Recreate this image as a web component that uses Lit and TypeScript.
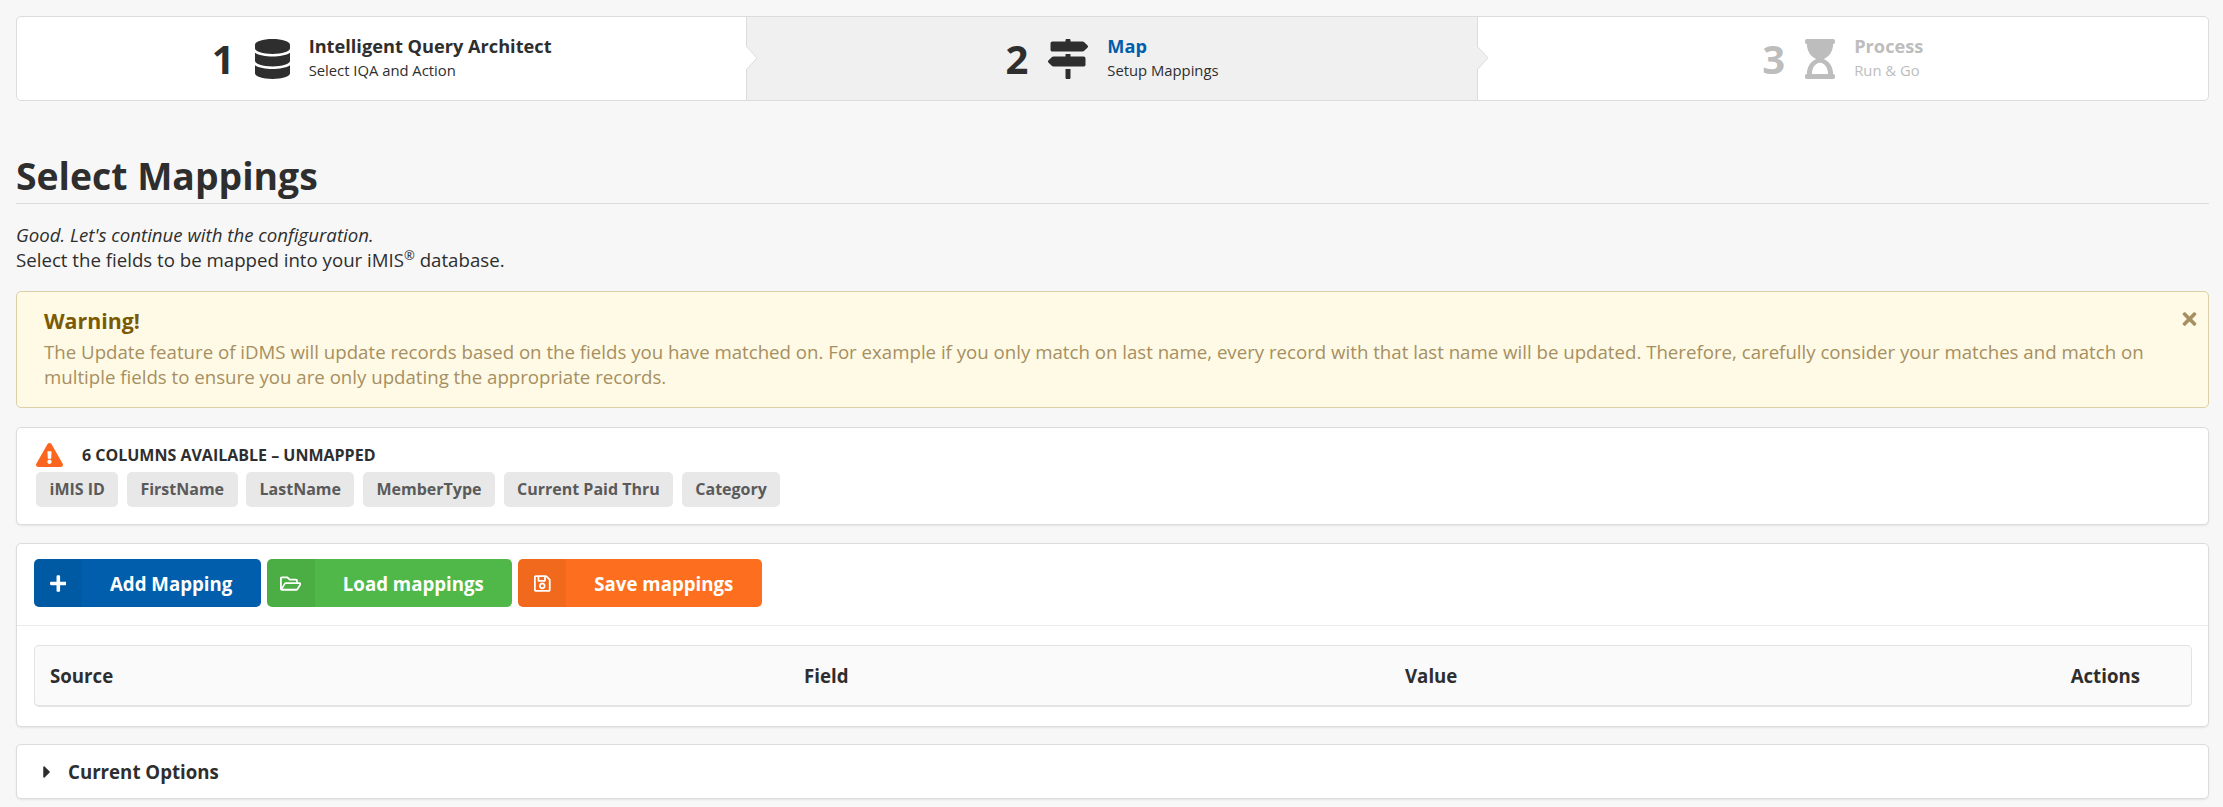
import { LitElement, html, css, svg } from "lit";
import { customElement } from "lit/decorators.js";

const icon = (vb: string, d: string, cls: string) =>
  html`<svg class=${cls} viewBox=${vb} aria-hidden="true">${svg`<path fill="currentColor" d=${d}></path>`}</svg>`;

const P = {
  database: "M448 73.143v45.714C448 159.143 347.667 192 224 192S0 159.143 0 118.857V73.143C0 32.857 100.333 0 224 0s224 32.857 224 73.143zM448 176v102.857C448 319.143 347.667 352 224 352S0 319.143 0 278.857V176c48.125 33.143 136.208 48.572 224 48.572S399.874 209.143 448 176zm0 160v102.857C448 479.143 347.667 512 224 512S0 479.143 0 438.857V336c48.125 33.143 136.208 48.572 224 48.572S399.874 369.143 448 336z",
  signs: "M507.31 84.69L464 41.37c-6-6-14.14-9.37-22.63-9.37H288V16c0-8.84-7.16-16-16-16h-32c-8.84 0-16 7.16-16 16v16H56c-13.25 0-24 10.75-24 24v80c0 13.25 10.75 24 24 24h385.37c8.49 0 16.62-3.37 22.63-9.37l43.31-43.31c6.25-6.26 6.25-16.38 0-22.63zM224 496c0 8.84 7.16 16 16 16h32c8.84 0 16-7.16 16-16V384h-64v112zm232-272H288v-32h-64v32H70.63c-8.49 0-16.62 3.37-22.63 9.37L4.69 276.69c-6.25 6.25-6.25 16.38 0 22.63L48 342.63c6 6 14.14 9.37 22.63 9.37H456c13.25 0 24-10.75 24-24v-80c0-13.25-10.75-24-24-24z",
  hourglass: "M360 0H24C10.745 0 0 10.745 0 24v16c0 13.255 10.745 24 24 24 0 90.965 51.016 167.734 120.842 192C75.016 280.266 24 357.035 24 448c-13.255 0-24 10.745-24 24v16c0 13.255 10.745 24 24 24h336c13.255 0 24-10.745 24-24v-16c0-13.255-10.745-24-24-24 0-90.965-51.016-167.734-120.842-192C308.984 231.734 360 154.965 360 64c13.255 0 24-10.745 24-24V24c0-13.255-10.745-24-24-24zm-64 448H88c0-77.458 46.204-144 104-144 57.786 0 104 66.517 104 144z",
  plus: "M416 208H272V64c0-17.67-14.33-32-32-32h-32c-17.67 0-32 14.33-32 32v144H32c-17.67 0-32 14.33-32 32v32c0 17.67 14.33 32 32 32h144v144c0 17.67 14.33 32 32 32h32c17.67 0 32-14.33 32-32V304h144c17.67 0 32-14.33 32-32v-32c0-17.67-14.33-32-32-32z",
  folder: "M527.9 224H480v-48c0-26.5-21.5-48-48-48H272l-64-64H48C21.5 64 0 85.5 0 112v288c0 26.5 21.5 48 48 48h400c16.5 0 31.9-8.5 40.7-22.6l79.9-128c20-31.9-3-73.4-40.7-73.4zM48 118c0-3.3 2.7-6 6-6h134.1l64 64H426c3.3 0 6 2.7 6 6v42H152c-16.8 0-32.4 8.8-41.1 23.2L48 351.4zm400 282H72l77.2-128H528z",
  save: "M433.941 129.941l-83.882-83.882A48 48 0 0 0 316.118 32H48C21.49 32 0 53.49 0 80v352c0 26.51 21.49 48 48 48h352c26.51 0 48-21.49 48-48V163.882a48 48 0 0 0-14.059-33.941zM272 80v80H144V80h128zm122 352H54a6 6 0 0 1-6-6V86a6 6 0 0 1 6-6h42v104c0 13.255 10.745 24 24 24h176c13.255 0 24-10.745 24-24V83.882l78.243 78.243a6 6 0 0 1 1.757 4.243V426a6 6 0 0 1-6 6zM224 232c-48.523 0-88 39.477-88 88s39.477 88 88 88 88-39.477 88-88-39.477-88-88-88zm0 128c-22.056 0-40-17.944-40-40s17.944-40 40-40 40 17.944 40 40-17.944 40-40 40z",
  times: "M242.72 256l100.07-100.07c12.28-12.28 12.28-32.19 0-44.48l-22.24-22.24c-12.28-12.28-32.19-12.28-44.48 0L176 189.28 75.93 89.21c-12.28-12.28-32.19-12.28-44.48 0L9.21 111.45c-12.28 12.28-12.28 32.19 0 44.48L109.28 256 9.21 356.07c-12.28 12.28-12.28 32.19 0 44.48l22.24 22.24c12.28 12.28 32.2 12.28 44.48 0L176 322.72l100.07 100.07c12.28 12.28 32.2 12.28 44.48 0l22.24-22.24c12.28-12.28 12.28-32.19 0-44.48L242.72 256z",
  warn: "M569.517 440.013C587.975 472.007 564.806 512 527.94 512H48.054c-36.937 0-59.999-40.055-41.577-71.987L246.423 23.985c18.467-32.009 64.72-31.951 83.154 0l239.94 416.028zM288 354c-25.405 0-46 20.595-46 46s20.595 46 46 46 46-20.595 46-46-20.595-46-46-46zm-43.673-165.346l7.418 136c.347 6.364 5.609 11.346 11.982 11.346h48.546c6.373 0 11.635-4.982 11.982-11.346l7.418-136c.375-6.874-5.098-12.654-11.982-12.654h-63.383c-6.884 0-12.356 5.78-11.981 12.654z",
  caret: "M0 384.662V127.338c0-17.818 21.543-26.741 34.142-14.142l128.662 128.662c7.81 7.81 7.81 20.474 0 28.284L34.142 398.804C21.543 411.404 0 402.48 0 384.662z",
};

const chips = ["iMIS ID", "FirstName", "LastName", "MemberType", "Current Paid Thru", "Category"];

@customElement("app-root")
export class AppRoot extends LitElement {
  static styles = css`
    :host {
      display: block;
      min-height: 807px;
      box-sizing: border-box;
      padding: 16px 14px 0 16px;
      background: #f7f7f7;
      color: #2e2e2e;
      font-family: "Open Sans", sans-serif;
      font-size: 18.67px;
      line-height: 25px;
    }
    * { box-sizing: border-box; }

    .steps {
      display: grid;
      grid-template-columns: repeat(3, 1fr);
      height: 85px;
      background: #fff;
      border: 1px solid #dcdcdc;
      border-radius: 5px;
    }
    .step {
      position: relative;
      display: flex;
      align-items: center;
      justify-content: center;
      border-right: 1px solid #dcdcdc;
    }
    .step:last-child { border-right: 0; }
    .step.active { background: #f0f0f0; }
    .step.off { color: #bdbdbd; }
    .num {
      font-size: 40px;
      font-weight: 700;
      line-height: 40px;
      margin-right: 20px;
    }
    .step-icon { height: 40px; display: block; margin-right: 19px; flex: none; }
    .step-icon.db { width: 35px; }
    .step-icon.sg { width: 40px; }
    .step-icon.hg { width: 30px; }
    .step-text { padding-bottom: 2px; }
    .step-title { font-size: 18.2px; font-weight: 700; line-height: 25px; }
    .active .step-title { color: #005eac; }
    .step-sub { font-size: 14.8px; font-weight: 400; line-height: 22px; }
    .notch {
      position: absolute;
      top: 29px;
      right: -12px;
      width: 12px;
      height: 24px;
      z-index: 1;
    }

    h1 {
      margin: 51px 0 0;
      padding-bottom: 3px;
      border-bottom: 1px solid #dcdcdc;
      font-size: 37.33px;
      font-weight: 700;
      line-height: 48px;
    }
    .intro { margin: 18px 0 0; }
    .intro em { display: block; }
    sup { font-size: 13px; line-height: 0; }

    .warning {
      position: relative;
      margin-top: 19px;
      height: 117px;
      padding: 15px 40px 0 27px;
      background: #fffae5;
      border: 1px solid #dccfa8;
      border-radius: 5px;
      color: #a68f62;
    }
    .warning h2 {
      margin: 0 0 4px;
      font-size: 21.33px;
      font-weight: 700;
      line-height: 28px;
      color: #7a5a05;
    }
    .warning p { margin: 0; }
    .close { position: absolute; top: 17px; right: 11px; width: 15px; height: 20px; color: #a68f62; }

    .card {
      background: #fff;
      border: 1px solid #dcdcdc;
      border-radius: 5px;
      box-shadow: 0 1px 2px rgba(0, 0, 0, 0.08);
    }
    .cols { margin-top: 19px; height: 98px; padding: 13px 19px; }
    .cols-head { display: flex; align-items: center; height: 28px; }
    .warn { width: 27px; height: 24px; color: #fb651e; margin-right: 19px; }
    .cols-title { font-size: 16px; font-weight: 700; text-transform: uppercase; }
    .chips { display: flex; gap: 8.5px; margin-top: 3px; }
    .chip {
      height: 35px;
      padding: 0 13.5px;
      display: flex;
      align-items: center;
      background: #e8e8e8;
      border-radius: 5px;
      font-size: 16px;
      font-weight: 700;
      color: #5a5a5a;
    }

    .main { margin-top: 18px; height: 184px; }
    .toolbar {
      display: flex;
      gap: 6px;
      height: 82px;
      padding: 15px 17px;
      border-bottom: 1px solid #eaeaea;
    }
    .btn {
      display: flex;
      align-items: center;
      height: 48px;
      border-radius: 5px;
      color: #fff;
      font-size: 18.67px;
      font-weight: 700;
      overflow: hidden;
      padding-right: 28.5px;
    }
    .btn .ic {
      width: 48px;
      height: 100%;
      display: flex;
      align-items: center;
      justify-content: center;
      background: rgba(0, 0, 0, 0.05);
      margin-right: 28px;
    }
    .btn svg { height: 19px; display: block; }
    .blue { background: #005eac; }
    .green { background: #50b848; }
    .orange { background: #fd6f1f; }

    .table-wrap { padding: 19px 16px 0 17px; }
    .thead {
      display: grid;
      grid-template-columns: 754px 601px 1fr auto;
      align-items: center;
      height: 62px;
      padding: 0 51px 0 15px;
      background: #fafafa;
      border: 1px solid #e3e3e3;
      border-bottom-width: 2px;
      border-radius: 5px;
      font-size: 18.67px;
      font-weight: 700;
    }

    .options {
      display: flex;
      align-items: center;
      margin-top: 17px;
      height: 55px;
      padding-left: 26px;
      font-size: 18.67px;
      font-weight: 700;
    }
    .caret { width: 8px; height: 20px; margin-right: 17px; }
  `;

  private step(n: number, ic: unknown, title: string, sub: string, cls: string, notch?: string) {
    return html`<div class="step ${cls}">
      <span class="num">${n}</span>
      ${ic}
      <div class="step-text">
        <div class="step-title">${title}</div>
        <div class="step-sub">${sub}</div>
      </div>
      ${notch
        ? html`<svg class="notch" viewBox="0 0 12 24">${svg`<path d="M0 0 L11 12 L0 24" fill=${notch} stroke="#dcdcdc" stroke-width="1"></path>`}</svg>`
        : null}
    </div>`;
  }

  render() {
    return html`
      <div class="steps">
        ${this.step(1, icon("0 0 448 512", P.database, "step-icon db"), "Intelligent Query Architect", "Select IQA and Action", "", "#fff")}
        ${this.step(2, icon("0 0 512 512", P.signs, "step-icon sg"), "Map", "Setup Mappings", "active", "#f0f0f0")}
        ${this.step(3, icon("0 0 384 512", P.hourglass, "step-icon hg"), "Process", "Run & Go", "off")}
      </div>

      <h1>Select Mappings</h1>
      <p class="intro">
        <em>Good. Let's continue with the configuration.</em>
        Select the fields to be mapped into your iMIS<sup>®</sup> database.
      </p>

      <div class="warning">
        <h2>Warning!</h2>
        <p>The Update feature of iDMS will update records based on the fields you have matched on. For example if you only match on last name, every record with that last name will be updated. Therefore, carefully consider your matches and match on multiple fields to ensure you are only updating the appropriate records.</p>
        ${icon("0 0 352 512", P.times, "close")}
      </div>

      <div class="card cols">
        <div class="cols-head">
          ${icon("0 0 576 512", P.warn, "warn")}
          <span class="cols-title">6 Columns Available – Unmapped</span>
        </div>
        <div class="chips">${chips.map((c) => html`<span class="chip">${c}</span>`)}</div>
      </div>

      <div class="card main">
        <div class="toolbar">
          <div class="btn blue"><span class="ic">${icon("0 0 448 512", P.plus, "")}</span>Add Mapping</div>
          <div class="btn green"><span class="ic">${icon("0 0 576 512", P.folder, "")}</span>Load mappings</div>
          <div class="btn orange"><span class="ic">${icon("0 0 448 512", P.save, "")}</span>Save mappings</div>
        </div>
        <div class="table-wrap">
          <div class="thead"><span>Source</span><span>Field</span><span>Value</span><span>Actions</span></div>
        </div>
      </div>

      <div class="card options">
        ${icon("0 0 192 512", P.caret, "caret")}
        <span>Current Options</span>
      </div>
    `;
  }
}
